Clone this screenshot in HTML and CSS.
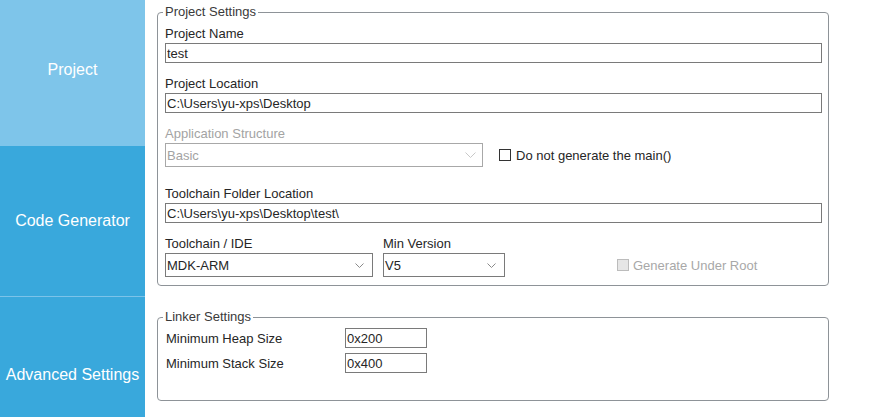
FILE: index.html
```html
<!DOCTYPE html>
<html lang="en">
<head>
  <meta charset="UTF-8">
  <title>Project Manager</title>
  <link rel="stylesheet" href="styles.css">
</head>
<body>

<div class="app">
  <nav class="sidebar">
    <div class="tab tab-project">Project</div>
    <div class="tab tab-code">Code Generator</div>
    <div class="tab tab-advanced">Advanced Settings</div>
  </nav>

  <main class="content">
    <fieldset class="group group-project">
      <legend>Project Settings</legend>

      <div class="field">
        <label>Project Name</label>
        <input class="text" type="text" value="test">
      </div>

      <div class="field">
        <label>Project Location</label>
        <input class="text" type="text" value="C:\Users\yu-xps\Desktop">
      </div>

      <div class="field field-select">
        <label class="disabled">Application Structure</label>
        <div class="row">
          <div class="select select-basic disabled">
            <span>Basic</span>
            <svg width="11" height="6" viewBox="0 0 11 6"><polyline points="0.5,0.5 5.5,5.5 10.5,0.5" fill="none" stroke="#c8c8c8"/></svg>
          </div>
          <div class="check"><span class="box"></span>Do not generate the main()</div>
        </div>
      </div>

      <div class="field">
        <label>Toolchain Folder Location</label>
        <input class="text" type="text" value="C:\Users\yu-xps\Desktop\test\">
      </div>

      <div class="row row-toolchain">
        <div class="col">
          <label>Toolchain / IDE</label>
          <div class="select select-ide">
            <span>MDK-ARM</span>
            <svg width="9" height="5" viewBox="0 0 9 5"><polyline points="0.5,0.5 4.5,4.5 8.5,0.5" fill="none" stroke="#8a8a8a"/></svg>
          </div>
        </div>
        <div class="col">
          <label>Min Version</label>
          <div class="select select-ver">
            <span>V5</span>
            <svg width="9" height="5" viewBox="0 0 9 5"><polyline points="0.5,0.5 4.5,4.5 8.5,0.5" fill="none" stroke="#8a8a8a"/></svg>
          </div>
        </div>
        <div class="check check-disabled"><span class="box"></span>Generate Under Root</div>
      </div>
    </fieldset>

    <fieldset class="group group-linker">
      <legend>Linker Settings</legend>
      <div class="line">
        <label>Minimum Heap Size</label>
        <input class="text short" type="text" value="0x200">
      </div>
      <div class="line">
        <label>Minimum Stack Size</label>
        <input class="text short" type="text" value="0x400">
      </div>
    </fieldset>
  </main>
</div>

</body>
</html>
```

FILE: styles.css
```css
body {
  margin: 0;
  height: 417px;
  overflow: hidden;
  background: #ffffff;
  font-family: 'Liberation Sans', Arial, sans-serif;
  font-size: 13px;
  color: #262626;
}

.app {
  display: flex;
  align-items: flex-start;
}

/* left navigation */
.sidebar {
  width: 145px;
  flex-shrink: 0;
  display: flex;
  flex-direction: column;
}

.tab {
  display: flex;
  align-items: center;
  justify-content: center;
  box-sizing: border-box;
  color: #ffffff;
  font-size: 16px;
  white-space: nowrap;
}

.tab-project {
  height: 146px;
  padding-bottom: 7px;
  background: #7ec5ea;
}

.tab-code {
  height: 151px;
  background: #39a8dc;
  border-bottom: 1px solid #7cc3e9;
}

.tab-advanced {
  height: 120px;
  padding-top: 36px;
  background: #39a8dc;
}

/* settings */
.content {
  padding: 5px 0 0 12px;
}

.group {
  width: 672px;
  box-sizing: border-box;
  margin: 0;
  border: 1px solid #8e9398;
  border-radius: 4px;
  padding: 7px 6px 8px 7px;
}

.group legend {
  margin-left: -2px;
  padding: 0 2px;
  line-height: 14px;
  color: #3a3a3a;
}

.group-linker {
  margin-top: 24px;
  padding: 4px 6px 27px 7px;
}

label {
  display: block;
  line-height: 15px;
  margin-bottom: 2px;
}

.disabled {
  color: #a3a3a3;
}

.field {
  margin-bottom: 13px;
}

.field-select {
  margin-bottom: 19px;
}

.text {
  display: block;
  width: 657px;
  height: 20px;
  box-sizing: border-box;
  margin: 0;
  padding: 0 1px;
  border: 1px solid #7a7a7a;
  border-radius: 0;
  outline: none;
  font-family: inherit;
  font-size: 13px;
  color: #262626;
  background: #ffffff;
}

.row {
  display: flex;
  align-items: center;
}

.select {
  height: 24px;
  box-sizing: border-box;
  border: 1px solid #7a7a7a;
  display: flex;
  align-items: center;
  justify-content: space-between;
  padding: 0 8px 0 1px;
  background: #ffffff;
}

.select-basic {
  width: 318px;
  padding-right: 6px;
  border-color: #a8a8a8;
}

.select-ide {
  width: 208px;
}

.select-ver {
  width: 122px;
}

.check {
  display: flex;
  align-items: center;
  margin-left: 16px;
  white-space: nowrap;
}

.check .box {
  width: 12px;
  height: 12px;
  box-sizing: border-box;
  border: 1px solid #333333;
  margin-right: 5px;
}

.row-toolchain {
  align-items: flex-end;
}

.row-toolchain .col + .col {
  margin-left: 10px;
}

.check-disabled {
  height: 24px;
  margin-left: 112px;
  color: #a8a8a8;
}

.check-disabled .box {
  border-color: #bcbcbc;
  background: #e6e6e6;
  margin-right: 4px;
}

/* linker rows */
.line {
  display: flex;
  align-items: center;
  margin-bottom: 5px;
}

.line:last-child {
  margin-bottom: 0;
}

.line label {
  width: 179px;
  margin: 0;
  padding-left: 1px;
}

.text.short {
  width: 82px;
}
```
